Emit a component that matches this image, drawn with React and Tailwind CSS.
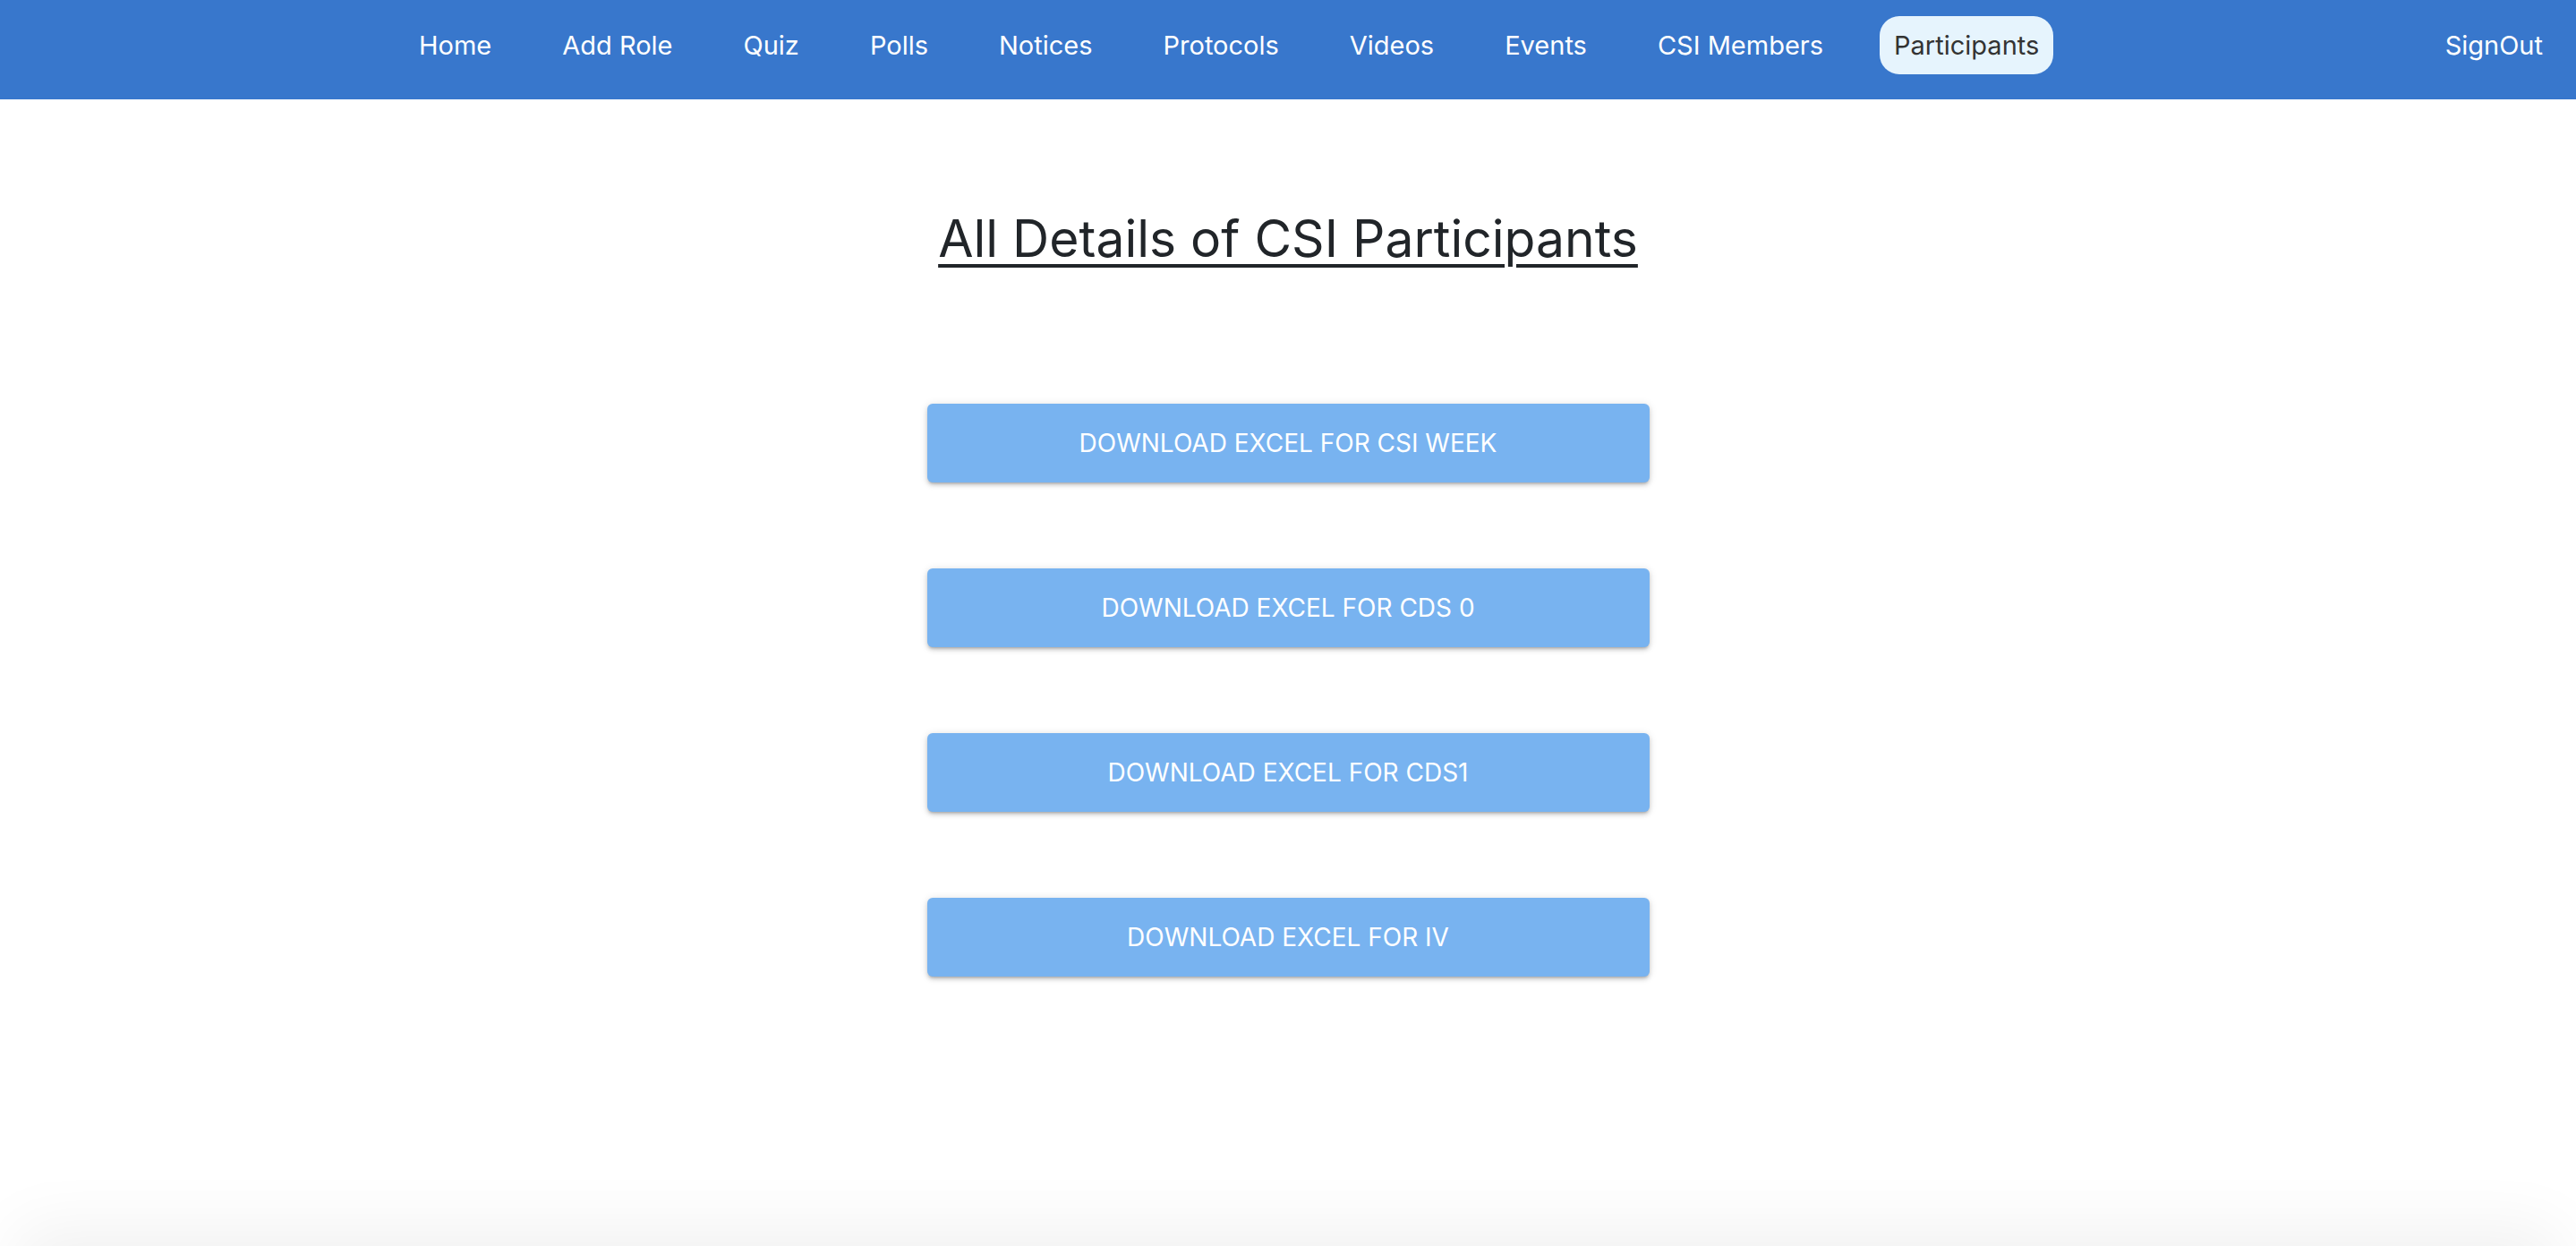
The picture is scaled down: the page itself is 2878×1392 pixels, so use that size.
import React from 'react'

const links = ['Home', 'Add Role', 'Quiz', 'Polls', 'Notices', 'Protocols', 'Videos', 'Events', 'CSI Members', 'Participants']

const downloads = [
  'Download Excel for CSI Week',
  'Download Excel for CDS 0',
  'Download Excel for CDS1',
  'Download Excel for IV',
]

const Navbar = () => {
  return (
    <nav className="h-[111px] bg-[#3877cc] flex items-start pt-[18px]">
      <ul className="flex items-center gap-[47px] ml-[452px]">
        {links.map((link) => {
          const active = link === 'Participants'
          return (
            <li
              key={link}
              className={`px-[16px] h-[65px] flex items-center rounded-[22px] text-[29px] cursor-pointer ${
                active ? 'bg-[#e6f4fd] text-[#333333]' : 'text-white'
              }`}
            >
              {link}
            </li>
          )
        })}
      </ul>
      <button className="ml-auto mr-[21px] px-[16px] h-[65px] text-[29px] text-white">SignOut</button>
    </nav>
  )
}

const App = () => {
  return (
    <div className="font-['Inter',sans-serif] bg-white">
      <Navbar />

      <main className="h-[1281px] flex flex-col items-center">
        <h1 className="mt-[123px] text-[57px] leading-[66px] text-[#212529] underline decoration-[4px] underline-offset-[8px]">
          All Details of CSI Participants
        </h1>

        {/* download buttons */}
        <div className="flex flex-col gap-[96px] mt-[151px]">
          {downloads.map((label) => (
            <button
              key={label}
              className="w-[807px] h-[88px] rounded-[6px] bg-[#78b3f0] text-white uppercase text-[28px] shadow-[0_3px_3px_-2px_rgba(0,0,0,0.2),0_3px_5px_0_rgba(0,0,0,0.14),0_1px_10px_0_rgba(0,0,0,0.12)]"
            >
              {label}
            </button>
          ))}
        </div>
      </main>

      <footer className="mx-[40px] h-[200px] bg-[#f2f2f2] shadow-[0_0_70px_20px_rgba(0,0,0,0.06)]"></footer>
    </div>
  )
}

export default App
